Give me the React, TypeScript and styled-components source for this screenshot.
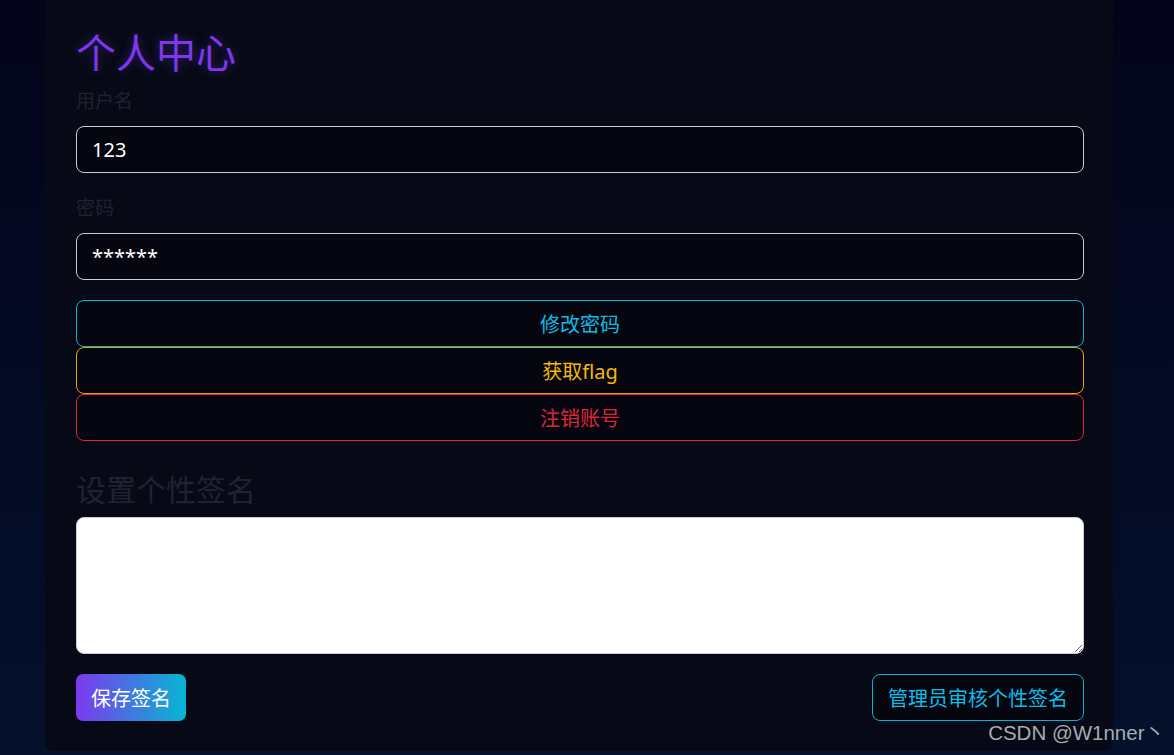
import styled, { createGlobalStyle } from 'styled-components';

const GlobalStyle = createGlobalStyle`
  html, body {
    margin: 0;
    padding: 0;
    height: 100%;
  }
  body {
    background: linear-gradient(180deg, #03041a 0%, #04102c 100%);
    font-family: "Noto Sans", "Noto Sans CJK SC", sans-serif;
    overflow: hidden;
  }
`;

const Page = styled.div`
  position: relative;
  height: 755px;
  display: flex;
  align-items: flex-start;
  padding: 0 61px 0 45px;
  box-sizing: border-box;
`;

const Card = styled.div`
  flex: 1;
  background: #070a16;
  border-radius: 0 0 8px 8px;
  padding: 23px 29px 30px 31px;
  display: flex;
  flex-direction: column;
`;

const Title = styled.h1`
  margin: 0 0 3px;
  font-size: 40px;
  font-weight: 400;
  line-height: 60px;
  color: #7b38ec;
  text-shadow: 0 0 10px rgba(124, 58, 237, 0.45);
`;

const Group = styled.div`
  display: flex;
  flex-direction: column;
  margin-bottom: 20px;
`;

const Label = styled.label`
  font-size: 19px;
  line-height: 30px;
  color: #1f2230;
  margin-bottom: 10px;
`;

const Input = styled.input`
  height: 47px;
  box-sizing: border-box;
  border: 1px solid #c9ccd6;
  border-radius: 8px;
  background: #05060f;
  color: #ffffff;
  font-family: "Noto Sans", "Noto Sans CJK SC", sans-serif;
  font-size: 20px;
  padding: 0 15px;
  outline: none;
`;

const ActionStack = styled.div`
  display: flex;
  flex-direction: column;
`;

const OutlineButton = styled.button<{ $color: string; $text?: string }>`
  height: 47px;
  box-sizing: border-box;
  border: 1px solid ${(p) => p.$color};
  border-radius: 8px;
  background: #05060f;
  color: ${(p) => p.$text || p.$color};
  font-family: "Noto Sans", "Noto Sans CJK SC", sans-serif;
  font-size: 20px;
  cursor: pointer;
  padding: 0 15px;
`;

const SubTitle = styled.h2`
  margin: 31px 0 9px;
  font-size: 30px;
  line-height: 36px;
  font-weight: 400;
  color: #1f2230;
`;

const TextArea = styled.textarea`
  height: 137px;
  box-sizing: border-box;
  border: 1px solid #c9ccd6;
  border-radius: 8px;
  background: #ffffff;
  resize: vertical;
  font-size: 18px;
  padding: 10px 15px;
  outline: none;
`;

const Footer = styled.div`
  display: flex;
  justify-content: space-between;
  margin-top: 20px;
`;

const GradientButton = styled.button`
  height: 47px;
  padding: 0 15px;
  border: none;
  border-radius: 7px;
  background: linear-gradient(90deg, #7c3aed 0%, #06b6d4 100%);
  color: #ffffff;
  font-family: "Noto Sans", "Noto Sans CJK SC", sans-serif;
  font-size: 20px;
  cursor: pointer;
`;

const Watermark = styled.div`
  position: absolute;
  right: 9px;
  bottom: 9px;
  font-family: "Liberation Sans", "Noto Sans CJK SC", sans-serif;
  font-size: 20.5px;
  color: #a9abb2;
  pointer-events: none;
`;

export default function App() {
  return (
    <>
      <GlobalStyle />
      <Page>
        <Card>
          <Title>个人中心</Title>
          <Group>
            <Label>用户名</Label>
            <Input defaultValue="123" />
          </Group>
          <Group>
            <Label>密码</Label>
            <Input defaultValue="******" />
          </Group>
          <ActionStack>
            <OutlineButton $color="#06b6d4" $text="#0cbde6">修改密码</OutlineButton>
            <OutlineButton $color="#e0a800" $text="#f5b70a">获取flag</OutlineButton>
            <OutlineButton $color="#dc2638">注销账号</OutlineButton>
          </ActionStack>
          <SubTitle>设置个性签名</SubTitle>
          <TextArea />
          <Footer>
            <GradientButton>保存签名</GradientButton>
            <OutlineButton $color="#06b6d4" $text="#0cbde6">管理员审核个性签名</OutlineButton>
          </Footer>
        </Card>
        <Watermark>CSDN @W1nner丶</Watermark>
      </Page>
    </>
  );
}
